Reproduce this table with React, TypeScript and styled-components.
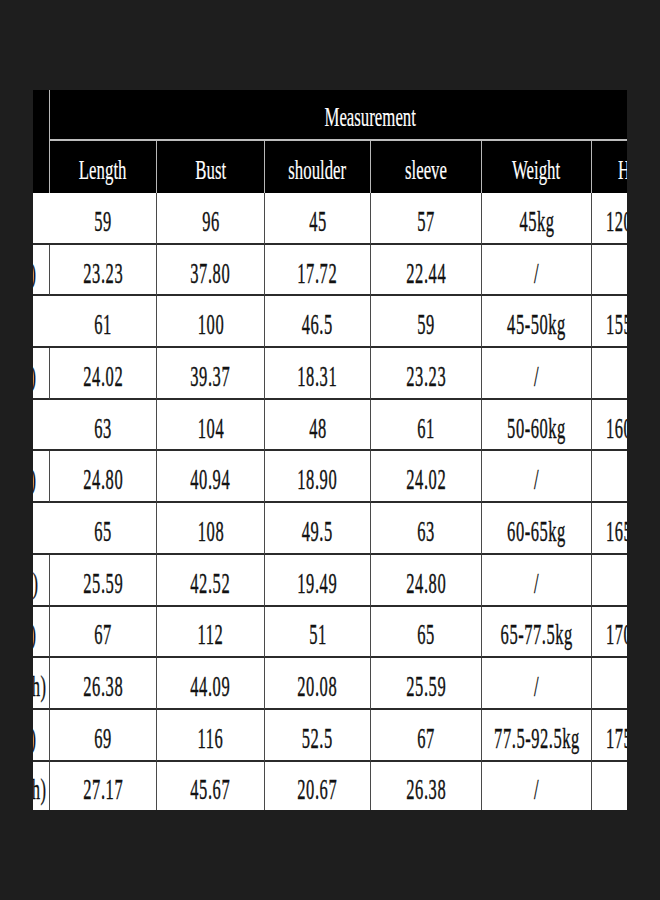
import styled, { createGlobalStyle } from "styled-components";

const GlobalStyle = createGlobalStyle`
  html, body {
    margin: 0;
    padding: 0;
    background: #1e1e1e;
  }
  * {
    box-sizing: border-box;
  }
`;

const Page = styled.div`
  min-height: 900px;
  padding: 90px 0 0 33px;
  background: #1e1e1e;
  font-family: "Liberation Serif", "Times New Roman", serif;
`;

const Sheet = styled.div`
  display: grid;
  width: 594px;
  grid-template-columns: 17px 107px 108px 106px 111px 110px 35px;
  grid-template-rows: 51px 52px repeat(11, 51.7px) 48px;
  background: #fff;
`;

const Corner = styled.div`
  grid-row: 1 / 3;
  background: #000;
  border-right: 1px solid #b8b8b8;
`;

const TitleCell = styled.div`
  grid-column: 2 / 8;
  background: #000;
  border-bottom: 2px solid #bdbdbd;
  overflow: hidden;
  display: flex;
  padding-top: 5px;
`;

const TitleInner = styled.div`
  flex: 0 0 640px;
  display: flex;
  justify-content: center;
  align-items: center;
`;

const HeadCell = styled.div<{ $last?: boolean }>`
  background: #000;
  border-right: ${(p) => (p.$last ? "none" : "1px solid #b8b8b8")};
  display: flex;
  justify-content: ${(p) => (p.$last ? "flex-start" : "center")};
  padding-left: ${(p) => (p.$last ? "26px" : "0")};
  align-items: center;
  padding-top: 5px;
  overflow: hidden;
`;

const HeadText = styled.span<{ $left?: boolean }>`
  display: inline-block;
  flex-shrink: 0;
  white-space: nowrap;
  color: #fff;
  font-size: 28px;
  line-height: 32px;
  -webkit-text-stroke: 0.2px #fff;
  transform: scaleX(0.6);
  transform-origin: ${(p) => (p.$left ? "left center" : "center")};
`;

const Cell = styled.div<{ $last?: boolean; $bottom?: boolean }>`
  background: #fff;
  border-right: ${(p) => (p.$last ? "none" : "1px solid #4a4a4a")};
  border-bottom: ${(p) => (p.$bottom ? "none" : "2px solid #2b2b2b")};
  display: flex;
  justify-content: ${(p) => (p.$last ? "flex-start" : "center")};
  padding-left: ${(p) => (p.$last ? "14px" : "0")};
  align-items: center;
  padding-top: 6px;
  overflow: hidden;
`;

const LabelCell = styled(Cell)<{ $reach: number }>`
  justify-content: flex-end;
  padding-right: ${(p) => p.$reach}px;
`;

const BodyText = styled.span<{ $origin?: string }>`
  display: inline-block;
  flex-shrink: 0;
  white-space: nowrap;
  color: #111;
  font-size: 30px;
  line-height: 34px;
  letter-spacing: 1px;
  -webkit-text-stroke: 0.4px #111;
  transform: scaleX(0.55);
  transform-origin: ${(p) => p.$origin ?? "center"};
`;

const columns = ["Length", "Bust", "shoulder", "sleeve", "Weight"];

const rows = [
  { label: "S", reach: 40, cells: ["59", "96", "45", "57", "45kg"], height: "120-155cm" },
  { label: "(inch)", reach: 12, cells: ["23.23", "37.80", "17.72", "22.44", "/"], height: "" },
  { label: "M", reach: 40, cells: ["61", "100", "46.5", "59", "45-50kg"], height: "155-160cm" },
  { label: "(inch)", reach: 12, cells: ["24.02", "39.37", "18.31", "23.23", "/"], height: "" },
  { label: "L", reach: 40, cells: ["63", "104", "48", "61", "50-60kg"], height: "160-165cm" },
  { label: "(inch)", reach: 12, cells: ["24.80", "40.94", "18.90", "24.02", "/"], height: "" },
  { label: "XL", reach: 40, cells: ["65", "108", "49.5", "63", "60-65kg"], height: "165-170cm" },
  { label: "(inch)", reach: 10, cells: ["25.59", "42.52", "19.49", "24.80", "/"], height: "" },
  { label: "2XL(cm)", reach: 12, cells: ["67", "112", "51", "65", "65-77.5kg"], height: "170-175cm" },
  { label: "2XL(inch)", reach: 2, cells: ["26.38", "44.09", "20.08", "25.59", "/"], height: "" },
  { label: "3XL(cm)", reach: 12, cells: ["69", "116", "52.5", "67", "77.5-92.5kg"], height: "175-185cm" },
  { label: "3XL(inch)", reach: 2, cells: ["27.17", "45.67", "20.67", "26.38", "/"], height: "" },
];

export default function App() {
  return (
    <>
      <GlobalStyle />
      <Page>
        <Sheet>
          <Corner />
          <TitleCell>
            <TitleInner>
              <HeadText>Measurement</HeadText>
            </TitleInner>
          </TitleCell>
          {columns.map((c) => (
            <HeadCell key={c}>
              <HeadText>{c}</HeadText>
            </HeadCell>
          ))}
          <HeadCell $last>
            <HeadText $left>Height</HeadText>
          </HeadCell>

          {rows.map((r, i) => {
            const bottom = i === rows.length - 1;
            return [
              <LabelCell key={i + "-l"} $reach={r.reach} $bottom={bottom}>
                <BodyText $origin="right center">{r.label}</BodyText>
              </LabelCell>,
              ...r.cells.map((v, j) => (
                <Cell key={i + "-" + j} $bottom={bottom}>
                  <BodyText>{v}</BodyText>
                </Cell>
              )),
              <Cell key={i + "-h"} $last $bottom={bottom}>
                <BodyText $origin="left center">{r.height}</BodyText>
              </Cell>,
            ];
          })}
        </Sheet>
      </Page>
    </>
  );
}
